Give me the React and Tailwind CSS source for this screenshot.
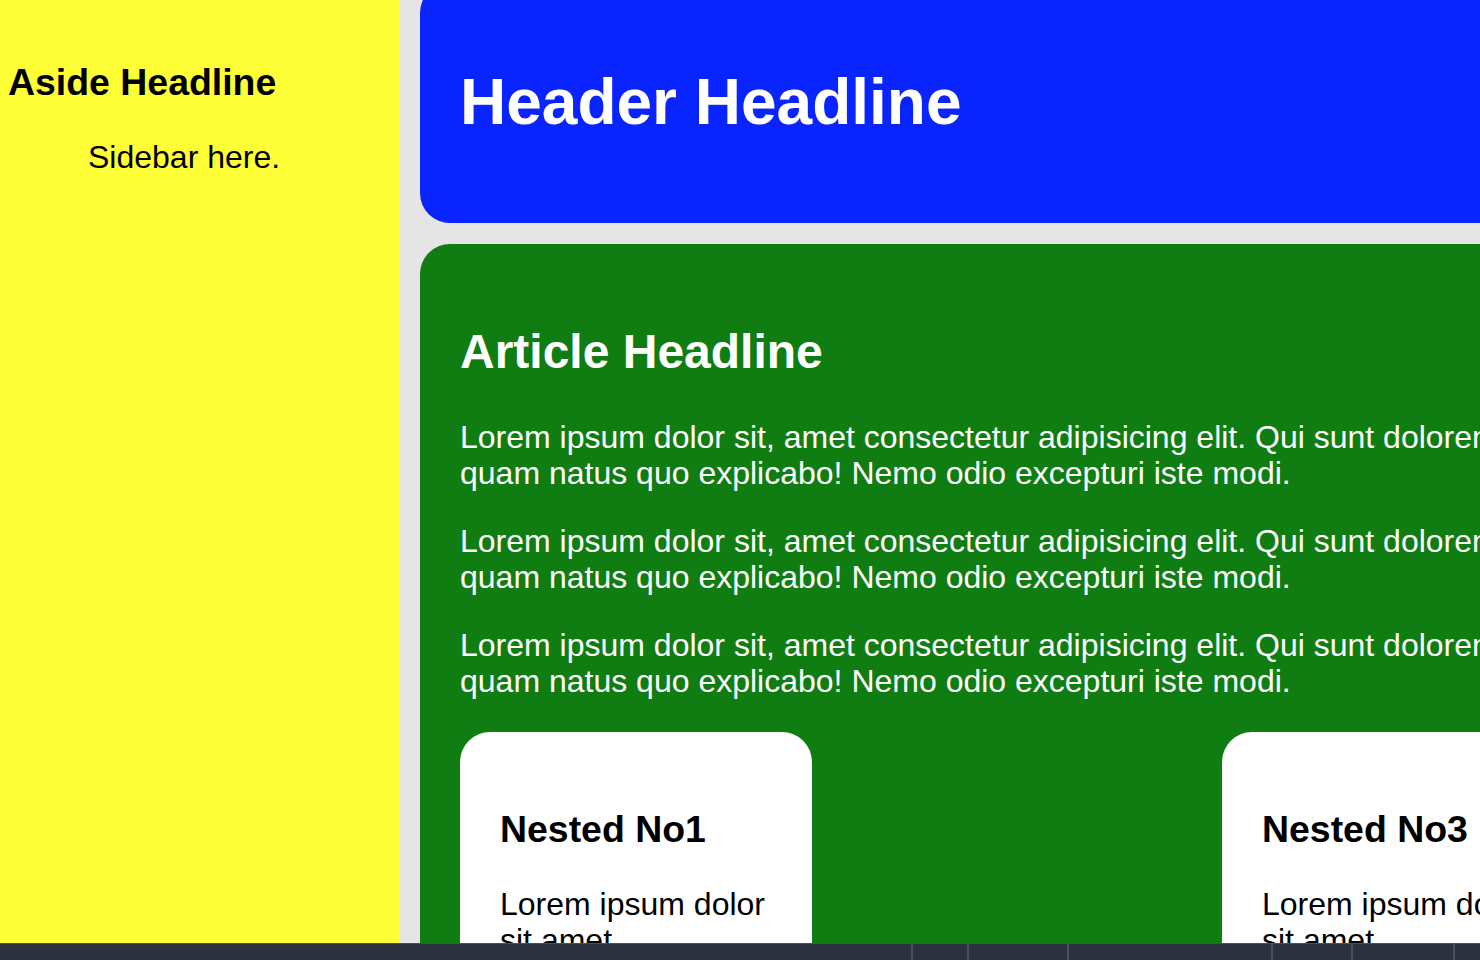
export default function App() {
  const font = { fontFamily: '"Liberation Sans", Arial, Helvetica, sans-serif' };
  const para = (
    <p className="m-0 text-[32px] leading-[36px] whitespace-nowrap">
      Lorem ipsum dolor sit, amet consectetur adipisicing elit. Qui sunt doloremque laudantium,
      <br />
      quam natus quo explicabo! Nemo odio excepturi iste modi.
    </p>
  );
  const card = (title, extra = "") => (
    <div className={`w-[352px] shrink-0 bg-white rounded-t-[30px] px-[40px] pt-[76px] text-black ${extra}`}>
      <h3 className="m-0 text-[37.44px] leading-[43px] font-bold whitespace-nowrap">{title}</h3>
      <p className="mt-[35px] mb-0 text-[32px] leading-[36px]">
        Lorem ipsum dolor sit amet consectetur adipisicing.
      </p>
    </div>
  );
  const seps = [911, 967, 1067, 1271, 1351, 1453];
  return (
    <div className="w-[1480px] h-[960px] flex flex-col overflow-hidden bg-[#e5e5e5]" style={font}>
      <div className="h-[943px] shrink-0 flex gap-[20px] overflow-hidden">
        <aside className="w-[400px] shrink-0 bg-[#ffff38] pt-[61px] pl-[8px] text-black">
          <h3 className="m-0 text-[37.44px] leading-[43px] font-bold">Aside Headline</h3>
          <p className="mt-[35px] ml-[80px] mb-0 text-[32px] leading-[36px]">Sidebar here.</p>
        </aside>
        <main className="w-[1240px] shrink-0 flex flex-col gap-[21px] mt-[-17px]">
          <header className="h-[240px] shrink-0 bg-[#0a24ff] rounded-l-[30px] pt-[82px] pl-[40px] text-white">
            <h1 className="m-0 text-[64px] leading-[74px] font-bold whitespace-nowrap">Header Headline</h1>
          </header>
          <article className="shrink-0 h-[720px] bg-[#107d12] rounded-tl-[30px] pt-[80px] pl-[40px] text-white overflow-hidden">
            <h2 className="m-0 text-[48px] leading-[55px] font-bold">Article Headline</h2>
            <div className="mt-[40px] flex flex-col gap-[32px]">
              {para}
              {para}
              {para}
            </div>
            <div className="mt-[33px] flex gap-[29px]">
              {card("Nested No1")}
              {card("Nested No2", "invisible")}
              {card("Nested No3")}
            </div>
          </article>
        </main>
      </div>
      <div className="h-[17px] shrink-0 bg-[#2d303d] border-t border-[#4b4e5c] flex">
        {seps.map((x, i) => (
          <div key={i} className="h-full w-[2px] bg-[#4b4e5c] shrink-0" style={{ marginLeft: i === 0 ? x : x - seps[i - 1] - 2 }} />
        ))}
      </div>
    </div>
  );
}
